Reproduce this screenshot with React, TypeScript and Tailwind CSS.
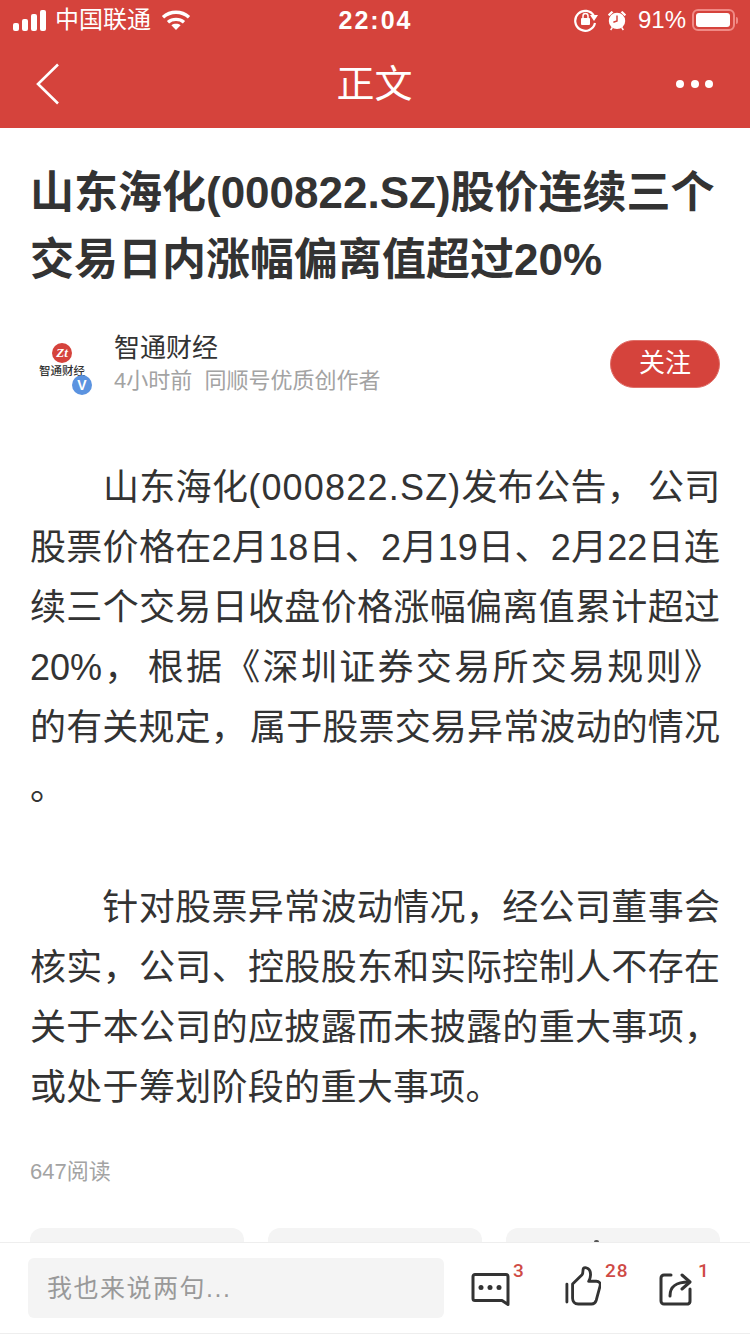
const cjk = 'font-["Liberation_Sans","Noto_Sans_CJK_SC",sans-serif]'

function StatusBar() {
  return (
    <div className="flex h-[40px] items-center justify-between pl-[13px] pr-[12px] text-white">
      <div className="flex w-[300px] items-center">
        <div className="flex items-end gap-[3px]">
          <span className="h-[8px] w-[6px] rounded-[2px] bg-white" />
          <span className="h-[12px] w-[6px] rounded-[2px] bg-white" />
          <span className="h-[17px] w-[6px] rounded-[2px] bg-white" />
          <span className="h-[21px] w-[6px] rounded-[2px] bg-white" />
        </div>
        <span className="ml-[9px] text-[24px] leading-[30px]">中国联通</span>
        <svg className="ml-[10px]" width="30" height="22" viewBox="0 0 30 22" fill="none" stroke="white" strokeWidth="3.4">
          <path d="M2 8.2C9.5 1.500 20.500 1.500 28 8.2" />
          <path d="M7 13.2C11.500 9.4 18.500 9.4 23 13.2" />
          <path d="M15 21l-4.600-4.800c2.600-1.800 6.600-1.800 9.200 0z" fill="white" stroke="none" />
        </svg>
      </div>
      <span className="text-[25px] leading-[30px] font-bold tracking-[2px]">22:04</span>
      <div className="flex w-[300px] items-center justify-end">
        <svg width="24" height="24" viewBox="0 0 24 24" fill="none">
          <path d="M20 8A10 10 0 1 0 21 15" stroke="white" strokeWidth="2.2" />
          <path d="M16 7h8l-4 6z" fill="white" />
          <rect x="7" y="10" width="9" height="7" rx="1" fill="white" />
          <path d="M9 10V8a2.500 2.500 0 0 1 5 0v2" stroke="white" strokeWidth="1.5" />
        </svg>
        <svg className="ml-[9px]" width="20" height="22" viewBox="0 0 22 24" fill="none">
          <circle cx="11" cy="13" r="9" fill="white" />
          <path d="M11 7v6l-4 1.500" stroke="#d5433c" strokeWidth="1.6" />
          <path d="M1 6l4-4 2 1.500-4.500 4.500zM21 6l-4-4-2 1.500 4.500 4.500z" fill="white" />
          <path d="M4 23l2-3M18 23l-2-3" stroke="white" strokeWidth="1.6" />
        </svg>
        <span className="ml-[11px] text-[24px] leading-[30px]">91%</span>
        <div className="ml-[6px] flex h-[22px] w-[43px] items-center rounded-[6px] border-2 border-[#f08a85] p-[2px]">
          <div className="h-full w-[34px] rounded-[3px] bg-white" />
        </div>
        <span className="ml-[1px] h-[7px] w-[2px] rounded-r-sm bg-[#f08a85]" />
      </div>
    </div>
  )
}

function NavBar() {
  return (
    <div className="grid h-[88px] grid-cols-3 items-center pl-[36px] pr-[37px] pb-[1px] text-white">
      <svg width="24" height="42" viewBox="0 0 24 42" fill="none" stroke="white" strokeWidth="2.6">
        <path d="M22 1.500L2 21l20 19.500" />
      </svg>
      <span className="text-center text-[38px] leading-[50px]">正文</span>
      <div className="flex w-[37px] items-center justify-between justify-self-end">
        <span className="h-[8px] w-[8px] rounded-full bg-white" />
        <span className="h-[8px] w-[8px] rounded-full bg-white" />
        <span className="h-[8px] w-[8px] rounded-full bg-white" />
      </div>
    </div>
  )
}

function AuthorRow() {
  return (
    <div className="mt-[38px] flex items-center justify-between">
      <div className="flex items-center">
        <div className="relative h-[60px] w-[66px]">
          <div className="absolute left-[22px] top-[9px] flex h-[20px] w-[20px] items-center justify-center rounded-full bg-[#d5433c] font-['Liberation_Serif',serif] text-[13px] font-bold italic leading-none text-white">
            Zt
          </div>
          <div className="absolute left-[9px] top-[29px] font-['Noto_Sans_CJK_SC',serif] text-[11.500px] font-medium leading-[14px] whitespace-nowrap text-[#333]">
            智通财经
          </div>
          <div className="absolute left-[42px] top-[41px] flex h-[20px] w-[20px] items-center justify-center rounded-full bg-[#5b93e0] text-[14px] font-bold leading-none text-white">
            V
          </div>
        </div>
        <div className="ml-[18px]">
          <div className="text-[26px] leading-[34px] text-[#333]">智通财经</div>
          <div className="mt-[1px] text-[22px] leading-[30px] text-[#a3a3a3]">4小时前&nbsp; 同顺号优质创作者</div>
        </div>
      </div>
      <div className="flex h-[48px] w-[110px] items-center justify-center rounded-full border border-[#e0706a] bg-[#d5433c] text-[26px] text-white">
        关注
      </div>
    </div>
  )
}

// each full line is stretched to the column, the way the article body justifies
function Line({ children }: { children: React.ReactNode }) {
  return <div className="whitespace-nowrap text-justify [text-align-last:justify]">{children}</div>
}

function Article() {
  return (
    <div className="mt-[62px] text-[36px] leading-[60px] text-[#333]">
      <div>
        <div className="whitespace-nowrap pl-[73px] tracking-[0.3px]">
          山东海化<span className="tracking-[1.200px]">(000822.SZ)</span>发布公告<span className="mr-[5px]">，</span>公司
        </div>
        <Line>股票价格在2月18日、2月19日、2月22日连</Line>
        <Line>续三个交易日收盘价格涨幅偏离值累计超过</Line>
        <Line>20%<span className="mr-[5px]">，</span>根据《深圳证券交易所交易规则》</Line>
        <Line>的有关规定<span className="mr-[3px]">，</span>属于股票交易异常波动的情况</Line>
        <div>。</div>
      </div>
      <div className="mt-[60px]">
        <Line><span className="inline-block w-[72px]" />针对股票异常波动情况，经公司董事会</Line>
        <Line>核实，公司、控股股东和实际控制人不存在</Line>
        <Line>关于本公司的应披露而未披露的重大事项，</Line>
        <div className="tracking-[0.3px]">或处于筹划阶段的重大事项。</div>
      </div>
    </div>
  )
}

function Footer() {
  return (
    <div className="flex h-[92px] items-start border-y border-[#eeeeee] bg-white pl-[28px] pt-[15px]">
      <div className="flex h-[60px] w-[416px] items-center rounded-[6px] bg-[#f4f4f4] pl-[19px] pt-[1px] text-[25px] tracking-[1.500px] text-[#999]">
        我也来说两句...
      </div>
      <div className="relative ml-[27px] mt-[14px] flex font-['Roboto',sans-serif]">
        <div className="relative w-[94px]">
          <svg width="39" height="36" viewBox="0 0 39 36" fill="none" stroke="#333" strokeWidth="3" strokeLinejoin="round">
            <path d="M4 2.500h31a2 2 0 0 1 2 2v28l-6-4H4a2 2 0 0 1-2-2v-22a2 2 0 0 1 2-2z" />
            <circle cx="10" cy="15.500" r="2.500" fill="#333" stroke="none" />
            <circle cx="19" cy="15.500" r="2.500" fill="#333" stroke="none" />
            <circle cx="28" cy="15.500" r="2.500" fill="#333" stroke="none" />
          </svg>
          <span className="absolute left-[42px] top-[-12px] text-[19px] font-medium leading-[22px] text-[#cf4a45]">3</span>
        </div>
        <div className="relative w-[94px]">
          <svg className="-mt-[6px]" width="36" height="40" viewBox="0 0 38 42" fill="none" stroke="#333" strokeWidth="3" strokeLinecap="round" strokeLinejoin="round">
            <path d="M2 19v19" />
            <path d="M8 19l10-10c1-1 1-3 1-5 0-2 2-3 4-2 3 1 4 4 4 7 0 3-1 5-2 7h8c3 0 5 2 4 5l-4 15c-1 3-2 4-5 4H14c-4 0-6-3-6-6z" />
          </svg>
          <span className="absolute left-[40px] top-[-12px] text-[19px] font-medium leading-[22px] tracking-[1px] text-[#cf4a45]">28</span>
        </div>
        <div className="relative w-[60px]">
          <svg width="33" height="34" viewBox="0 0 33 34" fill="none" stroke="#333" strokeWidth="3" strokeLinecap="round" strokeLinejoin="round">
            <path d="M12 3H5a3 3 0 0 0-3 3v23a3 3 0 0 0 3 3h24a3 3 0 0 0 2-3v-12" />
            <path d="M11 24c0-9 5-14 19-14" />
            <path d="M23 3l8 7-8 7" />
          </svg>
          <span className="absolute left-[39px] top-[-12px] text-[19px] font-medium leading-[22px] text-[#cf4a45]">1</span>
        </div>
      </div>
    </div>
  )
}

export default function App() {
  return (
    <div className={`flex h-[1334px] w-[750px] flex-col overflow-hidden bg-white ${cjk}`}>
      <div className="bg-[#d5433c]">
        <StatusBar />
        <NavBar />
      </div>
      <div className="min-h-0 flex-1 overflow-hidden px-[30px] pt-[31px]">
        <h1 className="text-[44px] font-bold leading-[67px] text-[#333] whitespace-nowrap">
          山东海化(000822.SZ)股价连续三个<br />
          交易日内涨幅偏离值超过20%
        </h1>
        <AuthorRow />
        <Article />
        <div className="mt-[39px] text-[22px] leading-[30px] text-[#a3a3a3]">647阅读</div>
        <div className="mt-[41px] grid grid-cols-3 gap-[24px]">
          <div className="h-[60px] rounded-[12px] bg-[#f4f4f4]" />
          <div className="h-[60px] rounded-[12px] bg-[#f4f4f4]" />
          <div className="h-[60px] rounded-[12px] bg-[#f4f4f4] pt-[12px] pl-[88px]">
            <div className="h-[2px] w-[5px] rounded-t-full bg-[#555]" />
          </div>
        </div>
      </div>
      <Footer />
    </div>
  )
}
